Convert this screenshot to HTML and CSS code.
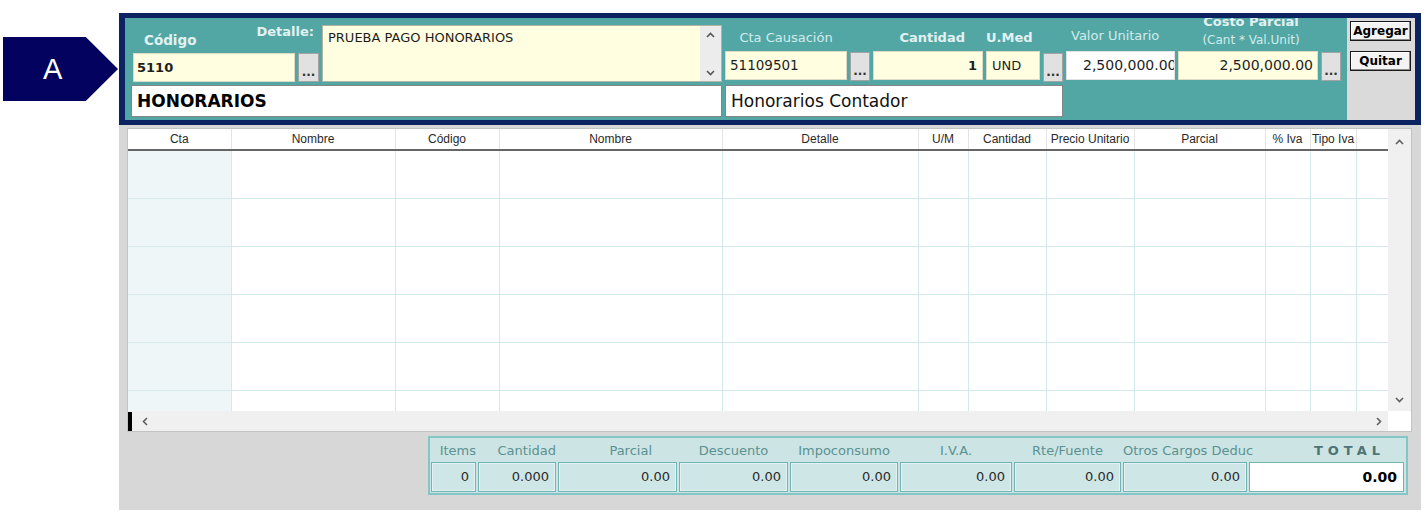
FILE: index.html
```html
<!DOCTYPE html>
<html lang="es">
<head>
    <meta charset="UTF-8">
    <title>Causación de gastos</title>
    <link rel="stylesheet" href="styles.css">
</head>
<body>

<div class="page">
    <div class="marker">A</div>

    <div class="app">
        <!-- captura del gasto -->
        <div class="entry">
            <div class="entry-form">
                <div class="lbl-pair">
                    <span class="lbl lbl-bold lbl-codigo">Código</span>
                    <span class="lbl lbl-bold lbl-detalle">Detalle:</span>
                </div>
                <div class="fld fld-yellow fld-codigo">5110</div>
                <div class="dots dots-codigo">...</div>
                <div class="memo">
                    <div class="memo-text">PRUEBA PAGO HONORARIOS</div>
                    <div class="memo-scroll">
                        <svg width="9" height="6" viewBox="0 0 9 6"><path d="M1 5 L4.5 1.5 L8 5" fill="none" stroke="#555" stroke-width="1.6"/></svg>
                        <svg width="9" height="6" viewBox="0 0 9 6"><path d="M1 1 L4.5 4.5 L8 1" fill="none" stroke="#555" stroke-width="1.6"/></svg>
                    </div>
                </div>
                <div class="fld fld-white fld-nombre">HONORARIOS</div>

                <span class="lbl lbl-light lbl-cta">Cta Causación</span>
                <div class="fld fld-yellow fld-cta">51109501</div>
                <div class="dots dots-cta">...</div>

                <span class="lbl lbl-bold lbl-cant">Cantidad</span>
                <div class="fld fld-yellow fld-cant">1</div>

                <span class="lbl lbl-bold lbl-umed">U.Med</span>
                <div class="fld fld-yellow fld-umed">UND</div>
                <div class="dots dots-umed">...</div>

                <span class="lbl lbl-light lbl-valor">Valor Unitario</span>
                <div class="fld fld-plain fld-valor">2,500,000.00</div>

                <div class="lbl-costo">
                    <span class="lbl lbl-bold">Costo Parcial</span>
                    <span class="lbl lbl-light lbl-small">(Cant * Val.Unit)</span>
                </div>
                <div class="fld fld-yellow fld-costo">2,500,000.00</div>
                <div class="dots dots-costo">...</div>

                <div class="fld fld-white fld-desc">Honorarios Contador</div>
            </div>
            <div class="entry-actions">
                <button class="act-btn">Agregar</button>
                <button class="act-btn">Quitar</button>
            </div>
        </div>

        <!-- detalle de movimientos -->
        <div class="grid-wrap">
            <div class="grid">
                <div class="grid-body">
                    <div class="grid-lines">
                        <table class="lines">
                            <colgroup>
                                <col style="width:103px">
                                <col style="width:164px">
                                <col style="width:104px">
                                <col style="width:223px">
                                <col style="width:196px">
                                <col style="width:50px">
                                <col style="width:78px">
                                <col style="width:88px">
                                <col style="width:131px">
                                <col style="width:45px">
                                <col style="width:46px">
                                <col style="width:32px">
                            </colgroup>
                            <thead>
                                <tr>
                                    <th>Cta</th><th>Nombre</th><th>Código</th><th>Nombre</th><th>Detalle</th><th>U/M</th>
                                    <th>Cantidad</th><th>Precio Unitario</th><th>Parcial</th><th>% Iva</th><th>Tipo Iva</th><th></th>
                                </tr>
                            </thead>
                            <tbody>
                                <tr><td></td><td></td><td></td><td></td><td></td><td></td><td></td><td></td><td></td><td></td><td></td><td></td></tr>
                                <tr><td></td><td></td><td></td><td></td><td></td><td></td><td></td><td></td><td></td><td></td><td></td><td></td></tr>
                                <tr><td></td><td></td><td></td><td></td><td></td><td></td><td></td><td></td><td></td><td></td><td></td><td></td></tr>
                                <tr><td></td><td></td><td></td><td></td><td></td><td></td><td></td><td></td><td></td><td></td><td></td><td></td></tr>
                                <tr><td></td><td></td><td></td><td></td><td></td><td></td><td></td><td></td><td></td><td></td><td></td><td></td></tr>
                                <tr><td></td><td></td><td></td><td></td><td></td><td></td><td></td><td></td><td></td><td></td><td></td><td></td></tr>
                            </tbody>
                        </table>
                    </div>
                    <div class="vscroll">
                        <svg width="9" height="6" viewBox="0 0 9 6"><path d="M1 5 L4.5 1.5 L8 5" fill="none" stroke="#606060" stroke-width="1.6"/></svg>
                        <svg width="9" height="6" viewBox="0 0 9 6"><path d="M1 1 L4.5 4.5 L8 1" fill="none" stroke="#606060" stroke-width="1.6"/></svg>
                    </div>
                </div>
                <div class="hscroll">
                    <div class="hscroll-track">
                        <span class="caret"></span>
                        <svg class="arrow-left" width="6" height="9" viewBox="0 0 6 9"><path d="M5 1 L1.5 4.5 L5 8" fill="none" stroke="#606060" stroke-width="1.6"/></svg>
                        <svg class="arrow-right" width="6" height="9" viewBox="0 0 6 9"><path d="M1 1 L4.5 4.5 L1 8" fill="none" stroke="#606060" stroke-width="1.6"/></svg>
                    </div>
                    <div class="corner"></div>
                </div>
            </div>
        </div>

        <!-- totales -->
        <div class="summary">
            <div class="totals">
                <span class="t-lbl t-right">Items</span>
                <span class="t-lbl t-right">Cantidad</span>
                <span class="t-lbl t-right t-parcial">Parcial</span>
                <span class="t-lbl">Descuento</span>
                <span class="t-lbl">Impoconsumo</span>
                <span class="t-lbl">I.V.A.</span>
                <span class="t-lbl">Rte/Fuente</span>
                <span class="t-lbl">Otros Cargos Deduc</span>
                <span class="t-lbl t-total-lbl">TOTAL</span>

                <div class="t-val">0</div>
                <div class="t-val">0.000</div>
                <div class="t-val">0.00</div>
                <div class="t-val">0.00</div>
                <div class="t-val">0.00</div>
                <div class="t-val">0.00</div>
                <div class="t-val">0.00</div>
                <div class="t-val">0.00</div>
                <div class="t-val t-total">0.00</div>
            </div>
        </div>
    </div>
</div>

</body>
</html>
```

FILE: styles.css
```css
body {
    margin: 0;
    background-color: #ffffff;
    font-family: "DejaVu Sans", Verdana, sans-serif;
}

.page {
    display: flex;
    align-items: flex-start;
}

/* etiqueta de la flecha */
.marker {
    margin: 37px 0 0 3px;
    width: 115px;
    height: 64px;
    box-sizing: border-box;
    padding-left: 40px;
    background-color: #03035f;
    color: #ffffff;
    font: 29px/64px "Liberation Sans", Arial, sans-serif;
    clip-path: polygon(0 0, 72% 0, 100% 50%, 72% 100%, 0 100%);
}

.app {
    margin: 13px 0 0 1px;
    width: 1302px;
    background-color: #d7d7d7;
}

/* ---------- captura ---------- */
.entry {
    display: flex;
    height: 112px;
    box-sizing: border-box;
    border: 6px solid #0b2361;
    border-top-width: 5px;
    border-bottom-width: 5px;
}

.entry-form {
    flex: 1;
    display: grid;
    grid-template-columns: 162px 21px 400px 122px 20px 110px 54px 20px 109px 140px 20px;
    grid-template-rows: 32px 31px 35px;
    column-gap: 3px;
    padding: 1px 6px 3px 8px;
    background-color: #52a7a5;
    overflow: hidden;
}

.lbl {
    font-size: 13px;
    line-height: 16px;
    white-space: nowrap;
}

.lbl-bold {
    font-weight: bold;
    color: #e2f1f1;
}

.lbl-light {
    color: #d3ebeb;
}

.lbl-small {
    font-size: 12px;
    line-height: 13px;
}

.lbl-pair {
    grid-column: 1 / 3;
    grid-row: 1;
    display: flex;
    justify-content: space-between;
}

.lbl-codigo {
    align-self: flex-end;
    margin: 0 0 3px 11px;
    font-size: 13.5px;
}

.lbl-detalle {
    align-self: flex-start;
    margin: 5px 5px 0 0;
}

.lbl-cta {
    grid-column: 4;
    grid-row: 1;
    align-self: end;
    justify-self: center;
    margin-bottom: 5px;
}

.lbl-cant {
    grid-column: 6;
    grid-row: 1;
    align-self: end;
    justify-self: end;
    margin: 0 18px 5px 0;
}

.lbl-umed {
    grid-column: 7 / 9;
    grid-row: 1;
    align-self: end;
    margin-bottom: 5px;
}

.lbl-valor {
    grid-column: 9;
    grid-row: 1;
    align-self: end;
    margin: 0 0 7px 5px;
}

.lbl-costo {
    grid-column: 10;
    grid-row: 1;
    display: flex;
    flex-direction: column;
    align-items: center;
    margin: -5px 0 0 6px;
}

.lbl-costo .lbl-bold {
    line-height: 15px;
}

.lbl-costo .lbl-small {
    margin-top: 5px;
}

.fld {
    box-sizing: border-box;
    height: 29px;
    line-height: 27px;
    font-size: 13px;
    color: #1e1e1e;
    white-space: nowrap;
    overflow: hidden;
}

.fld-yellow {
    background-color: #fffee1;
    border: 1px solid #dcdcc4;
}

.fld-white {
    background-color: #ffffff;
    border: 1px solid #858585;
}

.fld-plain {
    background-color: #ffffff;
    border: 1px solid #e2e2e2;
}

.fld-codigo {
    grid-column: 1;
    grid-row: 2;
    align-self: end;
    padding-left: 3px;
    font-weight: bold;
}

.fld-nombre {
    grid-column: 1 / 4;
    grid-row: 3;
    align-self: end;
    height: 32px;
    line-height: 30px;
    margin-left: -2px;
    padding-left: 5px;
    font-size: 17px;
    font-weight: bold;
    color: #000;
}

.fld-desc {
    grid-column: 4 / 9;
    grid-row: 3;
    align-self: end;
    height: 32px;
    line-height: 30px;
    padding-left: 5px;
    font-size: 17px;
    color: #111;
}

.fld-cta {
    grid-column: 4;
    grid-row: 2;
    padding-left: 4px;
    font-size: 13.5px;
}

.fld-cant {
    grid-column: 6;
    grid-row: 2;
    text-align: right;
    padding-right: 5px;
    font-weight: bold;
}

.fld-umed {
    grid-column: 7;
    grid-row: 2;
    padding-left: 5px;
}

.fld-valor {
    grid-column: 9;
    grid-row: 2;
    padding-left: 16px;
    font-size: 14px;
}

.fld-costo {
    grid-column: 10;
    grid-row: 2;
    text-align: right;
    padding-right: 4px;
    font-size: 14px;
}

.dots {
    grid-row: 2;
    box-sizing: border-box;
    height: 29px;
    display: flex;
    align-items: flex-end;
    justify-content: center;
    padding-bottom: 3px;
    background-color: #e1e1e1;
    border: 1px solid #a3a3a3;
    font-size: 12px;
    font-weight: bold;
    line-height: 11px;
    color: #333;
}

.dots-codigo { grid-column: 2; align-self: end; }
.dots-cta { grid-column: 5; margin-top: 1px; }
.dots-umed { grid-column: 8; margin-top: 2px; }
.dots-costo { grid-column: 11; margin-top: 1px; }

.memo {
    grid-column: 3;
    grid-row: 1 / 3;
    margin-top: 6px;
    display: flex;
    box-sizing: border-box;
    background-color: #fffee1;
    border: 1px solid #b4b4a4;
}

.memo-text {
    flex: 1;
    padding: 4px 5px;
    font-size: 13px;
    line-height: 15px;
    color: #1e1e1e;
}

.memo-scroll {
    width: 21px;
    display: flex;
    flex-direction: column;
    justify-content: space-between;
    align-items: center;
    padding: 6px 0 5px;
    background-color: #ececec;
}

.entry-actions {
    width: 68px;
    display: flex;
    flex-direction: column;
    align-items: flex-start;
    gap: 10px;
    padding: 3px 0 0 3px;
    box-sizing: border-box;
    background-color: #dadada;
}

.act-btn {
    width: 61px;
    height: 20px;
    padding: 0;
    background-color: #f3f3f3;
    border: 1px solid #1a1a1a;
    box-shadow: inset -1px -1px #8a8a8a, inset 1px 1px #ffffff;
    font: bold 12px "DejaVu Sans", Verdana, sans-serif;
    color: #000;
}

/* ---------- grilla ---------- */
.grid-wrap {
    padding: 3px 9px 0 8px;
}

.grid {
    height: 304px;
    box-sizing: border-box;
    display: flex;
    flex-direction: column;
    background-color: #ffffff;
    border: 1px solid #c3c3c3;
}

.grid-body {
    display: flex;
    height: 282px;
}

.grid-lines {
    width: 1260px;
    overflow: hidden;
}

.lines {
    width: 1260px;
    table-layout: fixed;
    border-collapse: collapse;
    font-family: "Liberation Sans", Arial, sans-serif;
}

.lines th {
    height: 20px;
    padding: 0;
    font-size: 12px;
    font-weight: normal;
    color: #2a2a2a;
    border-right: 1px solid #e4e4e4;
    border-bottom: 2px solid #666666;
}

.lines td {
    height: 47px;
    padding: 0;
    border-right: 1px solid #d3eaeb;
    border-bottom: 1px solid #d3eaeb;
}

.lines td:first-child {
    background-color: #eef6f7;
}

.vscroll {
    width: 23px;
    display: flex;
    flex-direction: column;
    justify-content: space-between;
    align-items: center;
    padding: 10px 0 8px;
    box-sizing: border-box;
    background-color: #f0f0f0;
}

.hscroll {
    display: flex;
    height: 20px;
}

.hscroll-track {
    flex: 1;
    display: flex;
    align-items: center;
    background-color: #f0f0f0;
}

.caret {
    width: 4px;
    height: 19px;
    background-color: #000;
}

.arrow-left {
    margin-left: 10px;
}

.arrow-right {
    margin-left: auto;
    margin-right: 6px;
}

.corner {
    width: 23px;
    background-color: #ffffff;
}

/* ---------- totales ---------- */
.summary {
    padding: 4px 13px 15px 309px;
}

.totals {
    display: grid;
    grid-template-columns: 45px 78px 119px 109px 108px 112px 107px 124px 155px;
    grid-template-rows: 18px 30px;
    column-gap: 2px;
    row-gap: 2px;
    padding: 4px 2px 1px 1px;
    background-color: #cce4e4;
    border: 2px solid #84c5c5;
}

.t-lbl {
    font-size: 13px;
    line-height: 18px;
    color: #5b9191;
    text-align: center;
    white-space: nowrap;
}

.t-right {
    text-align: right;
}

.t-parcial {
    padding-right: 25px;
}

.t-total-lbl {
    text-align: right;
    padding-right: 19px;
    font-weight: bold;
    letter-spacing: 5px;
    color: #4e7474;
}

.t-val {
    box-sizing: border-box;
    padding-right: 6px;
    text-align: right;
    font-size: 13px;
    line-height: 28px;
    color: #2b2b2b;
    background-color: #cfe6e6;
    border: 1px solid #72b3b3;
    box-shadow: inset 0 0 0 1px #e2f1f1;
}

.t-total {
    background-color: #ffffff;
    box-shadow: none;
    font-size: 14px;
    font-weight: bold;
    color: #000;
}
```
